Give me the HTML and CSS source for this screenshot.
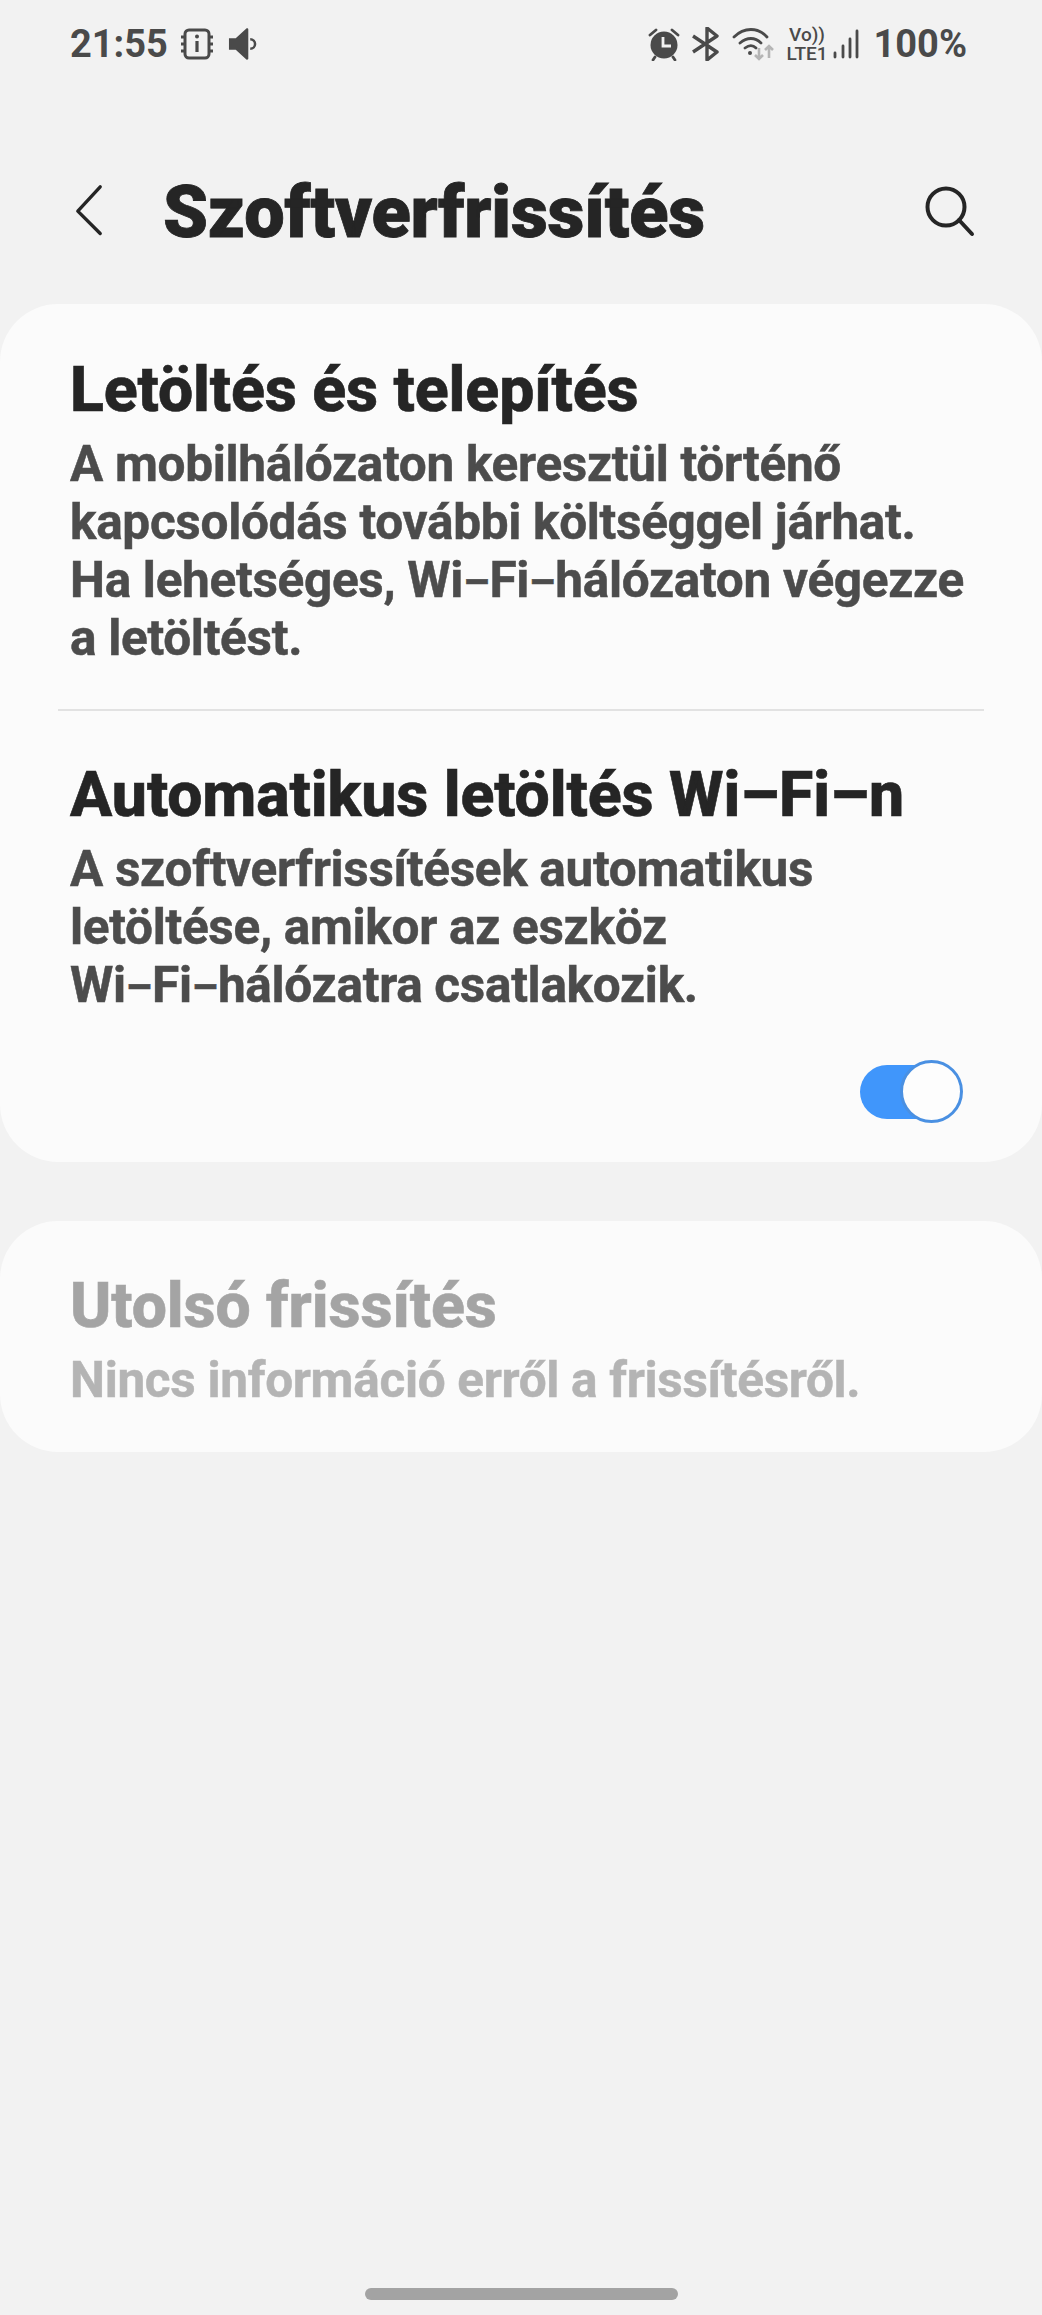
FILE: index.html
```html
<!DOCTYPE html>
<html lang="hu">
<head>
    <meta charset="UTF-8">
    <meta name="viewport" content="width=device-width, initial-scale=1.0">
    <title>Szoftverfrissítés</title>
    <link rel="stylesheet" href="styles.css">
</head>
<body>
    <div class="screen">
        <div class="status-bar">
            <div class="status-left">
                <span class="clock">21:55</span>
                <svg class="icon-chip" viewBox="0 0 34 34">
                    <rect x="5" y="3" width="24" height="28" rx="4" fill="none" stroke="#4a4a4a" stroke-width="3"/>
                    <path d="M1 10h4M1 17h4M1 24h4M29 10h4M29 17h4M29 24h4M17 14v11" fill="none" stroke="#4a4a4a" stroke-width="3.2"/>
                    <circle cx="17" cy="9.500" r="2" fill="#4a4a4a"/>
                </svg>
                <svg class="icon-sound" viewBox="0 0 30 34">
                    <path d="M1 11h7l11-10c1-.6 2 0 2 1v30c0 1-1 1.600-2 1L8 23H1z" fill="#4a4a4a"/>
                    <path d="M23 12a5 5 0 0 1 0 10" fill="none" stroke="#4a4a4a" stroke-width="2.600"/>
                </svg>
            </div>
            <div class="status-right">
                <svg class="icon-alarm" viewBox="0 0 32 34">
                    <circle cx="16" cy="18" r="13.500" fill="#4a4a4a"/>
                    <path d="M2 8l6-5M30 8l-6-5M7 30l-2 3M25 30l2 3" fill="none" stroke="#4a4a4a" stroke-width="2.800" stroke-linecap="round"/>
                    <path d="M15 10v9h8" fill="none" stroke="#f2f2f2" stroke-width="2.800"/>
                </svg>
                <svg class="icon-bt" viewBox="0 0 30 34">
                    <path d="M2 9l24 16-10 8V1l10 8L2 25" fill="none" stroke="#4a4a4a" stroke-width="3.400" stroke-linejoin="round"/>
                </svg>
                <svg class="icon-wifi" viewBox="0 0 44 34">
                    <path d="M2 10C12 0 26 0 35 10M8 16c7-6 15-6 21 0M13 21c4-3 8-3 11 0" fill="none" stroke="#4a4a4a" stroke-width="2.800" stroke-linecap="round"/>
                    <circle cx="18" cy="26" r="2" fill="#4a4a4a"/>
                    <path d="M27 21v11M23 28l4 4 4-4M37 31V19M33 23l4-4 4 4" fill="none" stroke="#b5b5b5" stroke-width="2.600"/>
                </svg>
                <div class="volte"><span class="volte-top">Vo))</span><span class="volte-bottom">LTE1</span></div>
                <svg class="icon-signal" viewBox="0 0 28 30">
                    <path d="M3 24v4M11 17v11M18 10v18M25 2v26" fill="none" stroke="#4a4a4a" stroke-width="2.800" stroke-linecap="round"/>
                </svg>
                <span class="battery">100%</span>
            </div>
        </div>

        <div class="app-bar">
            <svg class="icon-back" viewBox="0 0 32 60">
                <path d="M28 3L4 29l24 24" fill="none" stroke="#252525" stroke-width="3.600" stroke-linecap="round" stroke-linejoin="round"/>
            </svg>
            <h1>Szoftverfrissítés</h1>
            <svg class="icon-search" viewBox="0 0 52 52">
                <circle cx="22" cy="21" r="18.500" fill="none" stroke="#252525" stroke-width="4"/>
                <path d="M35 34l13 14" fill="none" stroke="#252525" stroke-width="4" stroke-linecap="round"/>
            </svg>
        </div>

        <div class="card">
            <div class="row row-first">
                <h2>Letöltés és telepítés</h2>
                <p>A mobilhálózaton keresztül történő<br>kapcsolódás további költséggel járhat.<br>Ha lehetséges, Wi<span class="dash">–</span>Fi<span class="dash">–</span>hálózaton végezze<br>a letöltést.</p>
            </div>
            <div class="divider"></div>
            <div class="row row-second">
                <h2>Automatikus letöltés Wi–Fi–n</h2>
                <p>A szoftverfrissítések automatikus<br>letöltése, amikor az eszköz<br>Wi<span class="dash">–</span>Fi<span class="dash">–</span>hálózatra csatlakozik.</p>
                <div class="toggle-line">
                    <div class="toggle"><div class="toggle-thumb"></div></div>
                </div>
            </div>
        </div>

        <div class="card card-disabled">
            <div class="row row-last">
                <h2>Utolsó frissítés</h2>
                <p>Nincs információ erről a frissítésről.</p>
            </div>
        </div>

        <div class="home-indicator"></div>
    </div>
</body>
</html>
```

FILE: styles.css
```css
* {
    box-sizing: border-box;
}

html, body {
    margin: 0;
    padding: 0;
}

body {
    background-color: #f2f2f2;
    font-family: Roboto, "Liberation Sans", sans-serif;
    color: #252525;
}

.screen {
    width: 1042px;
    height: 2315px;
    display: flex;
    flex-direction: column;
    overflow: hidden;
}

.status-bar {
    height: 88px;
    padding: 24px 75px 0 70px;
    display: flex;
    justify-content: space-between;
    align-items: flex-start;
    color: #4a4a4a;
}

.status-left, .status-right {
    display: flex;
    align-items: center;
    height: 40px;
}

.clock, .battery {
    font-size: 38px;
    font-weight: 700;
    line-height: 40px;
}

.icon-chip {
    width: 34px;
    height: 34px;
    margin-left: 12px;
}

.icon-sound {
    width: 29px;
    height: 34px;
    margin-left: 14px;
}

.icon-alarm {
    width: 32px;
    height: 34px;
}

.icon-bt {
    width: 30px;
    height: 34px;
    margin-left: 11px;
}

.icon-wifi {
    width: 44px;
    height: 34px;
    margin-left: 11px;
}

.volte {
    display: flex;
    flex-direction: column;
    margin-left: 10px;
    font-size: 19px;
    font-weight: 500;
    line-height: 19px;
    width: 43px;
    text-align: center;
}

.icon-signal {
    width: 28px;
    height: 30px;
    margin-left: 3px;
}

.battery {
    margin-left: 14px;
}

.app-bar {
    height: 216px;
    padding: 0 66px 0 73px;
    display: flex;
    align-items: flex-start;
}

.icon-back {
    width: 32px;
    height: 56px;
    margin-top: 96px;
}

.app-bar h1 {
    margin: 91px 0 0 58px;
    font-size: 72px;
    font-weight: 900;
    line-height: 68px;
    letter-spacing: -0.2px;
    -webkit-text-stroke: 0.8px #252525;
    flex: 1;
}

.icon-search {
    width: 52px;
    height: 52px;
    margin-top: 98px;
}

.card {
    background-color: #fbfbfb;
    border-radius: 58px;
    margin-bottom: 59px;
}

.row {
    padding: 0 40px 0 70px;
}

.row-first {
    padding-top: 49px;
    height: 405px;
}

.row-second {
    height: 451px;
    padding-top: 47px;
}

.row-last {
    height: 231px;
    padding-top: 48px;
    opacity: 0.4;
}

.divider {
    height: 2px;
    margin: 0 58px;
    background-color: #e2e2e2;
}

.row h2 {
    margin: 0;
    font-size: 62.500px;
    font-weight: 800;
    line-height: 74px;
    letter-spacing: -0.1px;
    -webkit-text-stroke: 0.6px #252525;
    color: #252525;
}

.row p {
    margin: 8px 0 0;
    font-size: 49.500px;
    font-weight: 700;
    line-height: 58px;
    letter-spacing: -0.3px;
    -webkit-text-stroke: 0.5px #4c4c4c;
    color: #4c4c4c;
}

.dash {
    font-size: 0.85em;
    line-height: 0;
}

.toggle-line {
    display: flex;
    justify-content: flex-end;
    padding-top: 51px;
    padding-right: 41px;
}

.toggle {
    position: relative;
    width: 101px;
    height: 54px;
    border-radius: 27px;
    background-color: #4096fb;
}

.toggle-thumb {
    position: absolute;
    top: -5px;
    right: -2px;
    width: 63px;
    height: 63px;
    border-radius: 50%;
    background-color: #fdfdfd;
    border: 3px solid #4a90e2;
}

.home-indicator {
    position: absolute;
    left: 365px;
    top: 2288px;
    width: 313px;
    height: 12px;
    border-radius: 6px;
    background-color: #a3a3a3;
}
```
